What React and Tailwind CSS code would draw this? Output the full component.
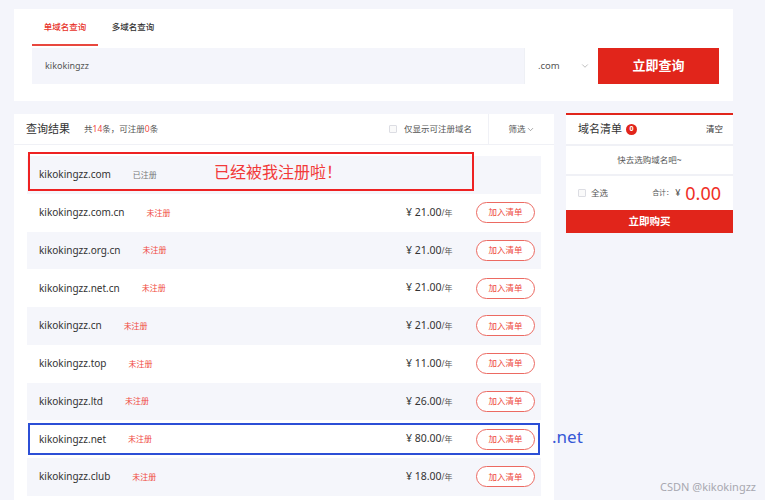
import { ChevronDown } from "lucide-react";

const rows = [
    { name: "kikokingzz.com", registered: true },
    { name: "kikokingzz.com.cn", price: "21.00" },
    { name: "kikokingzz.org.cn", price: "21.00" },
    { name: "kikokingzz.net.cn", price: "21.00" },
    { name: "kikokingzz.cn", price: "21.00" },
    { name: "kikokingzz.top", price: "11.00" },
    { name: "kikokingzz.ltd", price: "26.00" },
    { name: "kikokingzz.net", price: "80.00", blue: true },
    { name: "kikokingzz.club", price: "18.00" },
];

export default function App() {
    return (
        <div
            className="relative w-[765px] h-[500px] overflow-hidden bg-[#f4f5fb] pl-[14px] pt-[9px] text-[#333]"
            style={{ fontFamily: '"Noto Sans", "Noto Sans CJK SC", sans-serif' }}
        >
            {/* 搜索卡片 */}
            <div className="w-[719px] h-[92px] bg-white pl-[18px] pr-[14px]">
                <div className="flex h-[37px]">
                    <div className="w-[66px] flex flex-col">
                        <div className="flex-1 flex items-center justify-center pt-[2px] text-[8.5px] font-medium text-[#e8332a]">单域名查询</div>
                        <div className="h-[2px] bg-[#e8473e]" />
                    </div>
                    <div className="w-[70px] flex items-center justify-center text-[8.5px] font-medium text-[#333]">多域名查询</div>
                </div>
                <div className="flex h-[36px] mt-[2px]">
                    <div className="w-[492px] shrink-0 bg-[#f4f5fb] flex items-center pl-[13px] text-[9px] text-[#555]">kikokingzz</div>
                    <div className="w-[74px] shrink-0 bg-white border-l border-[#eef0f5] flex items-center justify-between pl-[13px] pr-[8px] text-[9.5px] text-[#555]">
                        .com
                        <ChevronDown size={10} strokeWidth={1.3} className="text-[#888]" />
                    </div>
                    <div className="w-[121px] shrink-0 bg-[#e1251b] flex items-center justify-center text-white text-[13px] font-bold">立即查询</div>
                </div>
            </div>

            <div className="flex gap-[12px] mt-[12px]">
                {/* 查询结果 */}
                <div className="w-[540px] h-[400px] bg-white mt-[1px]">
                    <div className="flex h-[31px] border-b border-[#f0f1f6]">
                        <div className="flex-1 flex items-center pl-[12px]">
                            <span className="text-[11px] text-[#333]">查询结果</span>
                            <span className="ml-[14px] text-[8.5px] text-[#555]">
                                共<span className="text-[#f04a3e]">14</span>条，可注册<span className="text-[#f04a3e]">0</span>条
                            </span>
                        </div>
                        <div className="flex items-center pr-[16px]">
                            <span className="w-[8px] h-[8px] border border-[#dcdde3] rounded-[1px] bg-[#fafafa]" />
                            <span className="ml-[7px] text-[8.5px] text-[#555]">仅显示可注册域名</span>
                        </div>
                        <div className="w-[66px] border-l border-[#f0f1f6] flex items-center justify-center text-[8.5px] text-[#555]">
                            筛选
                            <ChevronDown size={9} strokeWidth={1.5} className="text-[#666]" />
                        </div>
                    </div>

                    <div className="px-[13px] pt-[11px]">
                        {rows.map((r, i) => (
                            <div
                                key={r.name}
                                className={`relative flex items-center h-[37.75px] pl-[12px] pr-[6px] ${i % 2 === 0 ? "bg-[#f5f6fb]" : "bg-white"}`}
                            >
                                <div className="flex-1 flex items-center">
                                    <span className="text-[10px] text-[#333]">{r.name}</span>
                                    <span className={`ml-[22px] text-[8px] ${r.registered ? "text-[#777]" : "text-[#f04a3e]"}`}>
                                        {r.registered ? "已注册" : "未注册"}
                                    </span>
                                </div>
                                {!r.registered && (
                                    <>
                                        <div className="w-[71px] shrink-0 pl-[1px] text-[10.5px] text-[#333]">
                                            ¥ {r.price}
                                            <span className="text-[8px] text-[#555]">/年</span>
                                        </div>
                                        <div className="w-[59px] shrink-0 h-[21px] rounded-full border border-[#ec6a62] flex items-center justify-center text-[8.5px] text-[#ee4a40] bg-white">
                                            加入清单
                                        </div>
                                    </>
                                )}
                                {r.registered && (
                                    <div className="absolute left-[1px] top-[-4px] w-[446px] h-[39px] border-2 border-[#ee2222] flex items-center pl-[184px]">
                                        <span className="text-[16px] text-[#f23a3a]">已经被我注册啦！</span>
                                    </div>
                                )}
                                {r.blue && (
                                    <div className="absolute left-[1px] top-[3px] w-[512px] h-[32px] border-2 border-[#2c4fd6]" />
                                )}
                            </div>
                        ))}
                    </div>
                </div>

                {/* 域名清单 */}
                <div className="w-[167px] self-start bg-white border-t-2 border-[#e1251b]">
                    <div className="flex items-center justify-between h-[31px] pl-[12px] pr-[10px] border-b-2 border-[#f0f1f6]">
                        <div className="flex items-center">
                            <span className="text-[11px] text-[#333]">域名清单</span>
                            <span className="ml-[4px] w-[11px] h-[11px] rounded-full bg-[#e1251b] text-white text-[7px] font-bold flex items-center justify-center">0</span>
                        </div>
                        <span className="text-[8.5px] text-[#333]">清空</span>
                    </div>
                    <div className="h-[30px] flex items-center justify-center text-[8.5px] text-[#555] border-b-2 border-[#f0f1f6]">
                        快去选购域名吧~
                    </div>
                    <div className="h-[34px] flex items-center pl-[12px] pr-[12px]">
                        <span className="w-[8px] h-[8px] border border-[#dcdde3] rounded-[1px] bg-[#fafafa]" />
                        <span className="ml-[5px] text-[8.5px] text-[#555]">全选</span>
                        <div className="flex-1" />
                        <span className="text-[7px] text-[#555]">合计：</span>
                        <span className="ml-[2px] text-[9px] text-[#555]">¥</span>
                        <span className="ml-[5px] text-[18px] leading-none text-[#ef2e26]">0.00</span>
                    </div>
                    <div className="h-[23px] bg-[#e1251b] flex items-center justify-center text-white text-[10.5px] font-bold">立即购买</div>
                </div>
            </div>

            <div className="absolute left-[552px] top-[424px] text-[17px] text-[#3557d6]">.net</div>
            <div className="absolute left-[660px] top-[479px] text-[11px] text-[#a8a8b0]">CSDN @kikokingzz</div>
        </div>
    );
}
